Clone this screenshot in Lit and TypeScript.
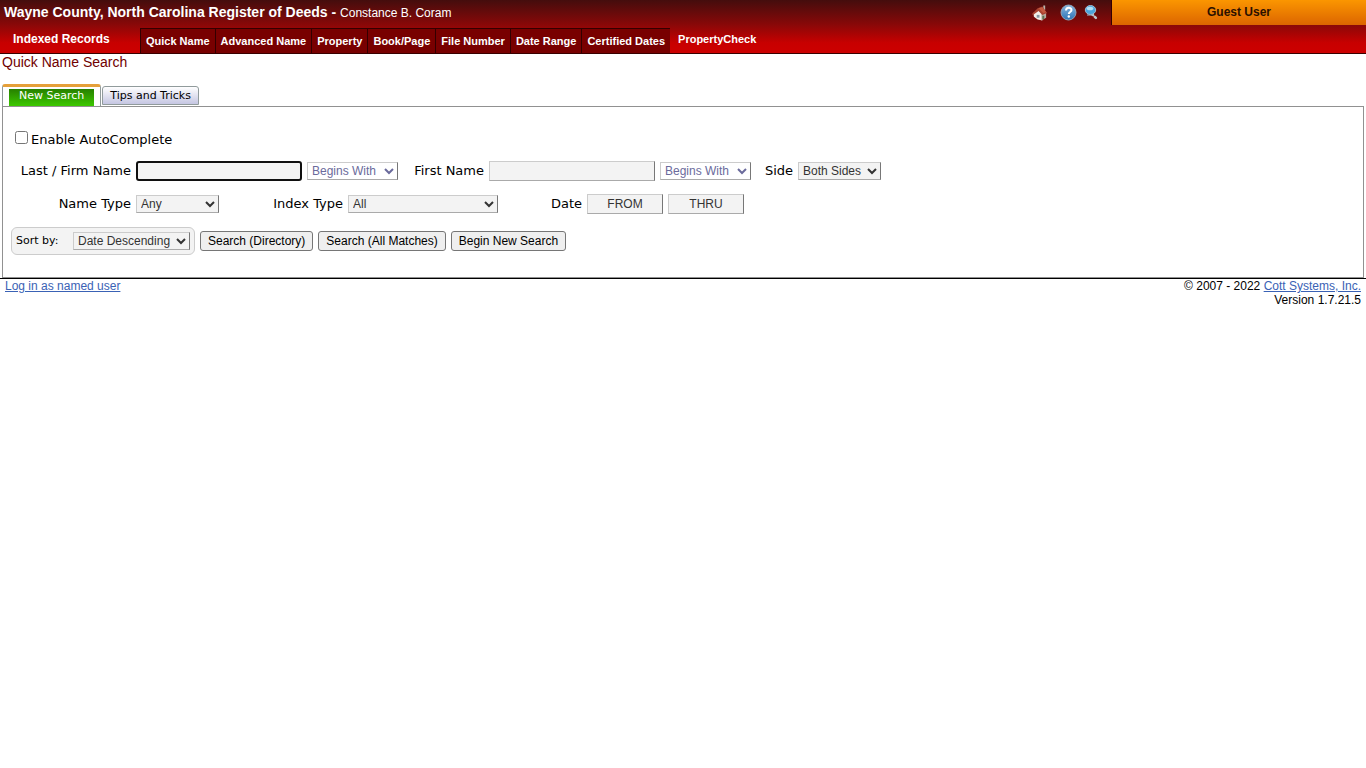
import { LitElement, html, css } from "lit";
import { customElement, query } from "lit/decorators.js";

const NAV = ["Quick Name", "Advanced Name", "Property", "Book/Page", "File Number", "Date Range", "Certified Dates"];

@customElement("app-root")
export class AppRoot extends LitElement {
  @query("#last") lastName!: HTMLInputElement;

  static styles = css`
    :host { display: block; font: 12px/14px "Liberation Sans", Arial, sans-serif; color: #000; background: #fff; }
    * { box-sizing: border-box; }
    a { color: #3a62b5; }
    header { display: flex; height: 54px; border-bottom: 1px solid #3a0000; color: #fff;
      background: linear-gradient(#440d0d 0, #8a0808 25px, #c80000 43px, #cc0000 100%); }
    .main { flex: 1; }
    .top { display: flex; height: 28px; padding: 4px 12px 0 4px; justify-content: space-between; }
    h1 { margin: 0; font-size: 14px; line-height: 17px; }
    h1 span { font-size: 12px; font-weight: normal; }
    .icons { display: flex; align-items: flex-start; }
    .icons a { display: block; height: 18px; }
    .icons a + a { margin-left: 12px; }
    .icons a + a + a { margin-left: 7px; }
    .icons svg { display: block; }
    .bar { display: flex; height: 25px; }
    .section { width: 140px; padding: 4px 0 0 13px; font-weight: bold; }
    nav { display: flex; font-size: 11px; font-weight: bold; }
    nav a { color: #fff; text-decoration: none; }
    .item { padding: 5px 5px 0; border-top: 1px solid #300; border-left: 1px solid #300; background: #780000; }
    .plain { padding: 4px 8px 0; }
    .user { width: 254px; height: 25px; padding-top: 5px; text-align: center; font-weight: bold; color: #2b1000;
      background: linear-gradient(#fb9600, #dc6500); box-shadow: -1px 0 #300; }
    h2 { margin: 0; padding: 0 2px; font-size: 14px; line-height: 17px; font-weight: normal; color: #700000; }
    .tabs { display: flex; align-items: flex-end; height: 22px; margin: 13px 2px 0; gap: 1px; }
    .tab { font: 11px/14px "DejaVu Sans", Verdana, sans-serif; margin: 0; border: 1px solid #919b9c; }
    .active { height: 22px; padding: 2px 6px 1px; background: #fff; border-top: 3px solid #e5a03a; border-bottom: 0; border-radius: 3px 3px 0 0; }
    .active span { display: block; height: 17px; padding: 0 10px; color: #fff; background: linear-gradient(#278000, #3cc800); }
    .other { height: 19px; margin-bottom: 1px; padding: 1px 7px; color: #000; border-radius: 3px 3px 0 0; background: linear-gradient(#fff, #c5c6e2); }
    form { margin: 0 2px; padding: 24px 8px 22px; border: 1px solid #919191; font: 13px/16px "DejaVu Sans", Verdana, sans-serif; }
    .row { display: flex; align-items: center; gap: 5px; }
    .check { gap: 3px; padding-left: 4px; height: 18px; }
    .check input { width: 13px; height: 13px; margin: 0 0 6px; }
    .names { height: 20px; margin-top: 12px; }
    .types { height: 20px; margin-top: 13px; }
    .actions { height: 28px; margin-top: 13px; }
    .l, .i, .m, .n, .s { text-align: right; white-space: nowrap; }
    .l { width: 120px; }
    .i { width: 119px; }
    .m { width: 81px; }
    .n { width: 79px; }
    .s { width: 37px; }
    select, .text, .actions button { font: 12px/14px "Liberation Sans", Arial, sans-serif; margin: 0; }
    .text, select { color: #333; background-color: #f3f3f3; border: 1px solid #ccc; border-right-color: #777; border-bottom-color: #aaa; border-radius: 0; }
    .text { width: 166px; height: 20px; padding: 1px 2px; }
    .text:focus { border: 2px solid #101010; border-radius: 3px; outline: none; caret-color: transparent; }
    select { height: 18px; padding: 0; }
    .match { width: 91px; color: #6b6b9c; background-color: #fff; }
    .type { width: 83px; }
    .index { width: 150px; }
    .sorting { width: 117px; }
    .text.date { width: 76px; text-align: center; }
    .date::placeholder { color: #333; }
    .sort { display: flex; align-items: center; justify-content: space-between; width: 184px; height: 28px; padding: 0 4px;
      border: 1px solid #ccc; border-radius: 6px; background: #f3f3f3; font-size: 11px; }
    .actions button { height: 20px; padding: 0 7px; color: #000; background: #efefef; border: 1px solid #767676; border-radius: 3px; }
    footer { display: flex; justify-content: space-between; padding: 0 5px; border-top: 1px solid #000; }
    .right { text-align: right; }
  `;

  firstUpdated() {
    this.lastName.focus();
  }

  render() {
    return html`
      <header>
        <div class="main">
          <div class="top">
            <h1>Wayne County, North Carolina Register of Deeds - <span>Constance B. Coram</span></h1>
            <div class="icons">
              <a href="#" aria-label="Home"><svg width="16" height="18" viewBox="0 0 17 18">
                <path d="M12 1h2v5h-2z" fill="#b9b1a8" />
                <path d="M1.500 9l5.500-3 4 4v7l-5-1-4-3z" fill="#f2eee8" />
                <path d="M10 10l5-2v6l-5 3z" fill="#b8aca2" />
                <path d="M6 4l5-2 5 7-5 2-4-4-6 4-1-1z" fill="#a94331" />
                <path d="M7 4l4-1 4 5-3 1z" fill="#c45b42" />
                <path d="M5 11h3v3H5z" fill="#8497a3" /><path d="M11 12h2v3l-2 1z" fill="#5b7350" />
              </svg></a>
              <a href="#" aria-label="Help"><svg width="17" height="18" viewBox="0 0 17 18">
                <defs><linearGradient id="hg" x2="0" y2="1"><stop stop-color="#86b5df" /><stop offset="1" stop-color="#2d74b6" /></linearGradient></defs>
                <circle cx="8.5" cy="8.5" r="7.5" fill="url(#hg)" stroke="#8fa5b8" />
                <path d="M6 6.500c0-3.500 5.500-3.500 5.500-.5 0 2-2.700 2-2.700 4" fill="none" stroke="#fff" stroke-width="2" />
                <circle cx="8.800" cy="12.500" r="1.200" fill="#fff" />
              </svg></a>
              <a href="#" aria-label="Search"><svg width="16" height="18" viewBox="0 0 16 18">
                <path d="M8 10l5 5" stroke="#bfc5ca" stroke-width="2.500" stroke-linecap="round" stroke-dasharray="1.500 2.500" />
                <ellipse cx="6.500" cy="6" rx="5.200" ry="4.500" fill="#4ba5dc" stroke="#9ebbd0" />
                <ellipse cx="6" cy="4.500" rx="3.400" ry="1.800" fill="#b5e2f7" />
                <path d="M3 11h6" stroke="#9ebbd0" />
              </svg></a>
            </div>
          </div>
          <div class="bar">
            <div class="section">Indexed Records</div>
            <nav>${NAV.map((n) => html`<a class="item" href="#">${n}</a>`)}<a class="plain" href="#">PropertyCheck</a></nav>
          </div>
        </div>
        <div class="user">Guest User</div>
      </header>
      <h2>Quick Name Search</h2>
      <div class="tabs">
        <button class="tab active" type="button"><span>New Search</span></button>
        <button class="tab other" type="button">Tips and Tricks</button>
      </div>
      <form @submit=${(e: Event) => e.preventDefault()}>
        <div class="row check"><input type="checkbox" id="auto" /><label for="auto">Enable AutoComplete</label></div>
        <div class="row names">
          <label class="l" for="last">Last / Firm Name</label>
          <input class="text" id="last" type="text" />
          <select class="match" aria-label="Last name match"><option>Begins With</option></select>
          <label class="m" for="first">First Name</label>
          <input class="text" id="first" type="text" />
          <select class="match" aria-label="First name match"><option>Begins With</option></select>
          <label class="s" for="side">Side</label>
          <select class="type" id="side"><option>Both Sides</option></select>
        </div>
        <div class="row types">
          <label class="l" for="type">Name Type</label>
          <select class="type" id="type"><option>Any</option></select>
          <label class="i" for="index">Index Type</label>
          <select class="index" id="index"><option>All</option></select>
          <label class="n" for="from">Date</label>
          <input class="text date" id="from" type="text" placeholder="FROM" />
          <input class="text date" type="text" placeholder="THRU" aria-label="Date through" />
        </div>
        <div class="row actions">
          <div class="sort"><label for="sort">Sort by:</label><select class="sorting" id="sort"><option>Date Descending</option></select></div>
          <button type="submit">Search (Directory)</button>
          <button type="submit">Search (All Matches)</button>
          <button type="reset">Begin New Search</button>
        </div>
      </form>
      <footer>
        <div><a href="#">Log in as named user</a></div>
        <div class="right">© 2007 - 2022 <a href="#">Cott Systems, Inc.</a><br />Version 1.7.21.5</div>
      </footer>
    `;
  }
}
